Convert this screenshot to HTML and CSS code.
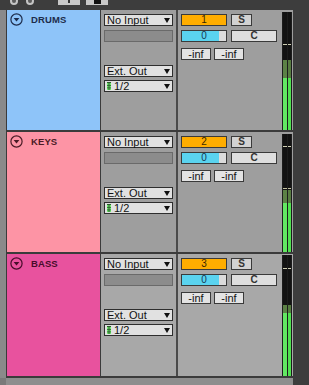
FILE: index.html
```html
<!DOCTYPE html>
<html lang="en">

<head>
    <meta charset="UTF-8" />
    <title>Mixer</title>
    <link rel="stylesheet" href="styles.css">
</head>

<body>
    <div class="topbar">
        <span class="tb-round"></span>
        <span class="tb-round"></span>
        <span class="tb-key first"><i class="line"></i></span>
        <span class="tb-key"><i class="block"></i></span>
    </div>

    <div class="rack">
        <!-- track 1 -->
        <div class="track drums">
            <div class="title">
                <svg class="fold" viewBox="0 0 13 13"><circle cx="6.5" cy="6.5" r="5.6" /><path d="M3.6 5 L9.4 5 L6.5 8.6 Z" /></svg>
                <span>DRUMS</span>
            </div>
            <div class="io">
                <div class="select">No Input</div>
                <div class="slot"></div>
                <div class="select out">Ext. Out</div>
                <div class="select"><svg class="chan" viewBox="0 0 4 8"><rect x="0" y="0" width="4" height="8" fill="#2d5a2d" /><rect x="0" y="1" width="1.5" height="7" fill="#6ee86e" /><rect x="2.5" y="1" width="1.5" height="7" fill="#6ee86e" /><rect x="0" y="3" width="4" height="0.8" fill="#2d5a2d" /><rect x="0" y="5.5" width="4" height="0.8" fill="#2d5a2d" /></svg>1/2</div>
            </div>
            <div class="mix">
                <div class="controls">
                    <div class="row">
                        <span class="box num">1</span>
                        <span class="box solo">S</span>
                    </div>
                    <div class="row">
                        <span class="box vol">0</span>
                        <span class="box pan">C</span>
                    </div>
                    <div class="row peaks">
                        <span class="box peak">-inf</span>
                        <span class="box peak">-inf</span>
                    </div>
                </div>
                <div class="meter" style="--off: 2px; --a: 48px; --b: 66px; --t: 32px; --t2: -9px">
                    <span class="ch"></span><span class="ch"></span>
                </div>
            </div>
        </div>

        <!-- track 2 -->
        <div class="track keys">
            <div class="title">
                <svg class="fold" viewBox="0 0 13 13"><circle cx="6.5" cy="6.5" r="5.6" /><path d="M3.6 5 L9.4 5 L6.5 8.6 Z" /></svg>
                <span>KEYS</span>
            </div>
            <div class="io">
                <div class="select">No Input</div>
                <div class="slot"></div>
                <div class="select out">Ext. Out</div>
                <div class="select"><svg class="chan" viewBox="0 0 4 8"><rect x="0" y="0" width="4" height="8" fill="#2d5a2d" /><rect x="0" y="1" width="1.5" height="7" fill="#6ee86e" /><rect x="2.5" y="1" width="1.5" height="7" fill="#6ee86e" /><rect x="0" y="3" width="4" height="0.8" fill="#2d5a2d" /><rect x="0" y="5.5" width="4" height="0.8" fill="#2d5a2d" /></svg>1/2</div>
            </div>
            <div class="mix">
                <div class="controls">
                    <div class="row">
                        <span class="box num">2</span>
                        <span class="box solo">S</span>
                    </div>
                    <div class="row">
                        <span class="box vol">0</span>
                        <span class="box pan">C</span>
                    </div>
                    <div class="row peaks">
                        <span class="box peak">-inf</span>
                        <span class="box peak">-inf</span>
                    </div>
                </div>
                <div class="meter" style="--off: 2px; --a: 56px; --b: 69px; --t: 12px; --t2: 54px">
                    <span class="ch"></span><span class="ch"></span>
                </div>
            </div>
        </div>

        <!-- track 3 -->
        <div class="track bass last">
            <div class="title">
                <svg class="fold" viewBox="0 0 13 13"><circle cx="6.5" cy="6.5" r="5.6" /><path d="M3.6 5 L9.4 5 L6.5 8.6 Z" /></svg>
                <span>BASS</span>
            </div>
            <div class="io">
                <div class="select">No Input</div>
                <div class="slot"></div>
                <div class="select out">Ext. Out</div>
                <div class="select"><svg class="chan" viewBox="0 0 4 8"><rect x="0" y="0" width="4" height="8" fill="#2d5a2d" /><rect x="0" y="1" width="1.5" height="7" fill="#6ee86e" /><rect x="2.5" y="1" width="1.5" height="7" fill="#6ee86e" /><rect x="0" y="3" width="4" height="0.8" fill="#2d5a2d" /><rect x="0" y="5.5" width="4" height="0.8" fill="#2d5a2d" /></svg>1/2</div>
            </div>
            <div class="mix">
                <div class="controls">
                    <div class="row">
                        <span class="box num">3</span>
                        <span class="box solo">S</span>
                    </div>
                    <div class="row">
                        <span class="box vol">0</span>
                        <span class="box pan">C</span>
                    </div>
                    <div class="row peaks">
                        <span class="box peak">-inf</span>
                        <span class="box peak">-inf</span>
                    </div>
                </div>
                <div class="meter" style="--off: 1px; --a: 50px; --b: 58px; --t: 13px; --t2: -9px">
                    <span class="ch"></span><span class="ch"></span>
                </div>
            </div>
        </div>
    </div>

    <div class="footer"></div>
</body>

</html>
```

FILE: styles.css
```css
/* base */

* {
    box-sizing: border-box;
}

body {
    margin: 0;
    width: 309px;
    height: 385px;
    overflow: hidden;
    background: #3d3d3d;
    font-family: "Liberation Sans", Arial, sans-serif;
    color: #111;
}
/* top strip with cut-off buttons */

.topbar {
    height: 10px;
    width: 293px;
    display: flex;
    align-items: flex-start;
    padding-left: 10px;
    overflow: hidden;
}

.tb-round {
    width: 8px;
    height: 8px;
    margin-top: -3px;
    margin-right: 8px;
    border-radius: 50%;
    border: 2px solid #c4c4c4;
    background: #5a5a5a;
}

.tb-key {
    width: 22px;
    height: 5px;
    background: #c8c8c8;
    display: flex;
    justify-content: center;
    margin-left: 6px;
}

.tb-key.first {
    margin-left: 16px;
}

.tb-key .line {
    width: 2px;
    height: 3px;
    background: #333;
}

.tb-key .block {
    width: 7px;
    height: 4px;
    background: #111;
}
/* tracks */

.rack {
    width: 293px;
    background: #8a8a8a;
    padding-left: 6px;
}

.track {
    display: grid;
    grid-template-columns: 95px 77px 115px;
    height: 122px;
    border-bottom: 2px solid #3b3b3b;
}

.track.last {
    height: 124px;
}

.title {
    display: flex;
    align-items: flex-start;
    gap: 8px;
    padding: 3px 0 0 3px;
    border-left: 1px solid #3b3b3b;
    border-right: 1px solid #3b3b3b;
    font-size: 9.5px;
    font-weight: bold;
}

.title span {
    line-height: 13px;
    letter-spacing: 0.1px;
}

.fold {
    width: 13px;
    height: 13px;
    flex: none;
}

.fold circle {
    fill: none;
    stroke: currentColor;
    stroke-width: 1.2;
}

.fold path {
    fill: currentColor;
}

.drums .title {
    background: #8ec4f9;
    color: #1d2c4b;
}

.keys .title {
    background: #fd94a5;
    color: #4a1b25;
}

.bass .title {
    background: #e8529e;
    color: #470c2b;
}
/* input / output column */

.io {
    background: #9e9e9e;
    border-right: 2px solid #4a4a4a;
    padding: 4px 3px 0;
    display: flex;
    flex-direction: column;
}

.bass .io,
.bass .mix {
    background: #a8a8a8;
}

.select {
    height: 12px;
    background: #e1e1e1;
    border: 1px solid #2e2e2e;
    font-size: 11px;
    line-height: 10px;
    padding-left: 2px;
    display: flex;
    align-items: center;
    gap: 3px;
    margin-bottom: 3px;
}

.select::after {
    content: "";
    margin-left: auto;
    margin-right: 2px;
    border-left: 3.5px solid transparent;
    border-right: 3.5px solid transparent;
    border-top: 5px solid #111;
}

.select:first-child {
    margin-bottom: 4px;
}

.select.out {
    margin-top: 23px;
}

.chan {
    width: 4px;
    height: 8px;
    flex: none;
}

.slot {
    height: 12px;
    background: #8c8c8c;
    border: 1px solid #6a6a6a;
}
/* mixer column */

.mix {
    background: #9e9e9e;
    display: flex;
    padding-left: 3px;
}

.controls {
    padding-top: 4px;
    display: flex;
    flex-direction: column;
    gap: 4px;
}

.row {
    display: flex;
    gap: 4px;
}

.row.peaks {
    margin-top: 2px;
    gap: 3px;
}

.box {
    height: 12px;
    border: 1px solid #3a3a3a;
    font-size: 10px;
    line-height: 10px;
    text-align: center;
    background: #dedede;
}

.num {
    width: 46px;
    background: #ffad00;
    color: #3b2800;
}

.solo {
    width: 21px;
    background: #d2d2d2;
    font-weight: bold;
    color: #333;
}

.vol {
    width: 46px;
    background: linear-gradient(to right, #5ad3ef 0 37px, #dcdcdc 37px);
    color: #163a55;
}

.pan {
    width: 46px;
    font-weight: bold;
    color: #333;
}

.peak {
    width: 30px;
    font-size: 11px;
    background: #e3e3e3;
}
/* level meter */

.meter {
    width: 10px;
    margin: var(--off) 1px 0 auto;
    background: #1c1c1c;
    padding: 0 1px;
    display: flex;
    gap: 1px;
}

.ch {
    flex: 1;
    background:
        linear-gradient(to bottom, transparent var(--t), #cfcfb4 var(--t) calc(var(--t) + 1px), transparent calc(var(--t) + 1px)),
        linear-gradient(to bottom, transparent var(--t2), #c2c2a0 var(--t2) calc(var(--t2) + 1px), transparent calc(var(--t2) + 1px)),
        linear-gradient(to bottom, #121212 0 var(--a), #567b40 var(--a) var(--b), #4fe14f var(--b));
}

.ch:first-child {
    background:
        linear-gradient(to bottom, transparent var(--t), #cfcfb4 var(--t) calc(var(--t) + 1px), transparent calc(var(--t) + 1px)),
        linear-gradient(to bottom, transparent var(--t2), #c2c2a0 var(--t2) calc(var(--t2) + 1px), transparent calc(var(--t2) + 1px)),
        linear-gradient(to bottom, #121212 0 var(--a), #5b8145 var(--a) var(--b), #62e862 var(--b));
}
/* bottom strip */

.footer {
    width: 293px;
    height: 7px;
    background: #8e8e8e;
    border-left: 6px solid #7a7a7a;
}
```
